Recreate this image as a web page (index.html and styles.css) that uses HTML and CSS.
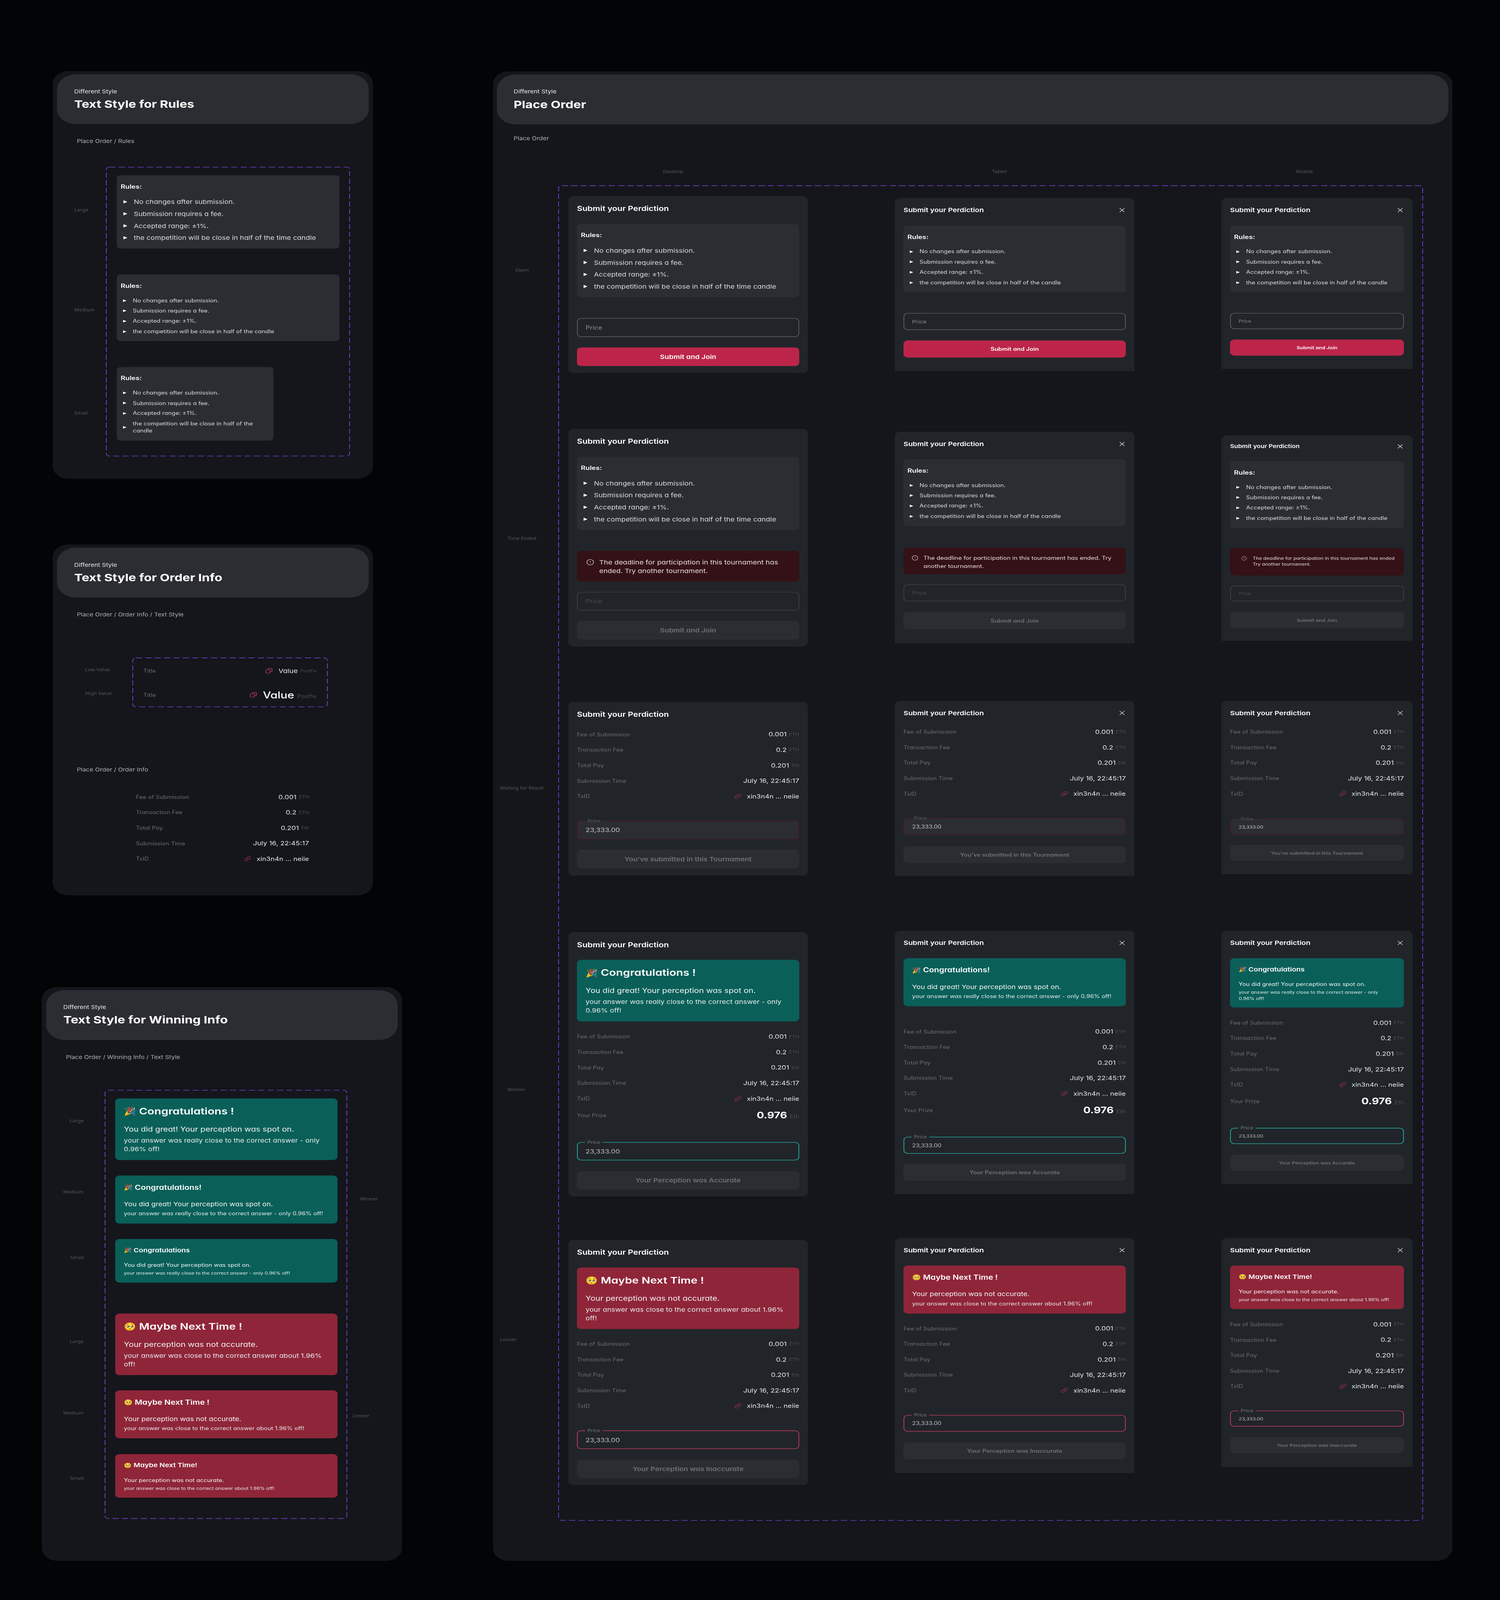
FILE: index.html
```html
<!DOCTYPE html>
<html lang="en">
<head>
<meta charset="utf-8">
<title>Place Order</title>
<link rel="stylesheet" href="styles.css">
</head>
<body>
<svg class="sprite" aria-hidden="true">
  <symbol id="i-link" viewBox="0 0 24 24"><path d="M10 13a5 5 0 0 0 7.54.54l3-3a5 5 0 0 0-7.07-7.07l-1.72 1.71"/><path d="M14 11a5 5 0 0 0-7.54-.54l-3 3a5 5 0 0 0 7.07 7.07l1.71-1.71"/></symbol>
  <symbol id="i-copy" viewBox="0 0 24 24"><rect x="2" y="8" width="13" height="13" rx="3"/><path d="M9 8V6a3 3 0 0 1 3-3h6a3 3 0 0 1 3 3v6a3 3 0 0 1-3 3h-3"/></symbol>
  <symbol id="i-x" viewBox="0 0 24 24"><path d="M4 4l16 16M20 4L4 20"/></symbol>
  <symbol id="i-alert" viewBox="0 0 24 24"><path d="M12 16h.01"/><path d="M12 8v4"/><path d="M15.312 2a2 2 0 0 1 1.414.586l4.688 4.688A2 2 0 0 1 22 8.688v6.624a2 2 0 0 1-.586 1.414l-4.688 4.688a2 2 0 0 1-1.414.586H8.688a2 2 0 0 1-1.414-.586l-4.688-4.688A2 2 0 0 1 2 15.312V8.688a2 2 0 0 1 .586-1.414l4.688-4.688A2 2 0 0 1 8.688 2z"/></symbol>
</svg>
<div class="canvas">
<div class="left">

<section class="panel p-rules">
  <header class="head"><p class="head-sub">Different Style</p><h2 class="head-title">Text Style for Rules</h2></header>
  <p class="crumb">Place Order / Rules</p>
  <div class="board b-rules">
    <div class="side s-rules">
      <span class="tag mt-126">Large</span>
      <span class="tag mt-297">Medium</span>
      <span class="tag mt-306">Small</span>
    </div>
    <div class="dash d-rules">
      <svg class="dash-line"><rect x="1" y="1" rx="8"/></svg>
      <div class="rules r-lg">
        <h4>Rules:</h4>
        <ul><li>No changes after submission.</li><li>Submission requires a fee.</li><li>Accepted range: ±1%.</li><li>the competition will be close in half of the time candle</li></ul>
      </div>
      <div class="rules r-md mt-82">
        <h4>Rules:</h4>
        <ul><li>No changes after submission.</li><li>Submission requires a fee.</li><li>Accepted range: ±1%.</li><li>the competition will be close in half of the candle</li></ul>
      </div>
      <div class="rules r-md r-narrow mt-82">
        <h4>Rules:</h4>
        <ul><li>No changes after submission.</li><li>Submission requires a fee.</li><li>Accepted range: ±1%.</li><li>the competition will be close in half of the candle</li></ul>
      </div>
    </div>
  </div>
</section>

<section class="panel p-info">
  <header class="head"><p class="head-sub">Different Style</p><h2 class="head-title">Text Style for Order Info</h2></header>
  <p class="crumb">Place Order / Order Info / Text Style</p>
  <div class="board b-info">
    <div class="side s-info">
      <span class="tag mt-28">Low Value</span>
      <span class="tag mt-55">High Value</span>
    </div>
    <div class="dash d-info">
      <svg class="dash-line"><rect x="1" y="1" rx="8"/></svg>
      <div class="row sample-low"><span class="key">Title</span><span class="val"><svg class="ico copy"><use href="#i-copy"/></svg><span class="num">Value</span><span class="post">Postfix</span></span></div>
      <div class="row sample-high"><span class="key">Title</span><span class="val"><svg class="ico copy"><use href="#i-copy"/></svg><span class="num">Value</span><span class="post">Postfix</span></span></div>
    </div>
  </div>
  <p class="crumb crumb-second">Place Order / Order Info</p>
  <div class="rows info-table">
    <div class="row"><span class="key">Fee of Submission</span><span class="val"><span class="num">0.001</span><span class="unit">ETH</span></span></div>
    <div class="row"><span class="key">Transaction Fee</span><span class="val"><span class="num">0.2</span><span class="unit">ETH</span></span></div>
    <div class="row"><span class="key">Total Pay</span><span class="val"><span class="num">0.201</span><span class="unit">Eth</span></span></div>
    <div class="row"><span class="key">Submission Time</span><span class="val"><span class="num">July 16, 22:45:17</span></span></div>
    <div class="row"><span class="key">TxID</span><span class="val"><svg class="ico link"><use href="#i-link"/></svg><span class="num hash">xin3n4n ... neiie</span></span></div>
  </div>
</section>

<section class="panel p-win">
  <header class="head"><p class="head-sub">Different Style</p><h2 class="head-title">Text Style for Winning Info</h2></header>
  <p class="crumb">Place Order / Winning Info / Text Style</p>
  <div class="board b-win">
    <div class="side s-win">
      <span class="tag mt-87">Large</span>
      <span class="tag mt-206">Medium</span>
      <span class="tag mt-187">Small</span>
      <span class="tag mt-246">Large</span>
      <span class="tag mt-206">Medium</span>
      <span class="tag mt-187">Small</span>
    </div>
    <div class="dash d-win">
      <svg class="dash-line"><rect x="1" y="1" rx="8"/></svg>
      <div class="notice good n-l"><h5><span class="emoji">🎉</span>Congratulations !</h5><p class="lead">You did great! Your perception was spot on.</p><p class="fine">your answer was really close to the correct answer - only 0.96% off!</p></div>
      <div class="notice good n-m mt-49"><h5><span class="emoji">🎉</span>Congratulations!</h5><p class="lead">You did great! Your perception was spot on.</p><p class="fine">your answer was really close to the correct answer - only 0.96% off!</p></div>
      <div class="notice good n-s mt-49"><h5><span class="emoji">🎉</span>Congratulations</h5><p class="lead">You did great! Your perception was spot on.</p><p class="fine">your answer was really close to the correct answer - only 0.96% off!</p></div>
      <div class="notice bad n-l mt-98"><h5><span class="emoji">🥺</span>Maybe Next Time !</h5><p class="lead">Your perception was not accurate.</p><p class="fine">your answer was close to the correct answer about 1.96% off!</p></div>
      <div class="notice bad n-m mt-48"><h5><span class="emoji">🥺</span>Maybe Next Time !</h5><p class="lead">Your perception was not accurate.</p><p class="fine">your answer was close to the correct answer about 1.96% off!</p></div>
      <div class="notice bad n-s mt-50"><h5><span class="emoji">🥺</span>Maybe Next Time!</h5><p class="lead">Your perception was not accurate.</p><p class="fine">your answer was close to the correct answer about 1.96% off!</p></div>
    </div>
    <div class="side s-win-right">
      <span class="tag tag-winner">Winner</span>
      <span class="tag tag-looser">Looser</span>
    </div>
  </div>
</section>

</div>

<section class="panel p-main">
  <header class="head"><p class="head-sub">Different Style</p><h2 class="head-title">Place Order</h2></header>
  <p class="crumb">Place Order</p>
  <div class="col-heads"><span class="tag">Desktop</span><span class="tag">Tablet</span><span class="tag">Mobile</span></div>
  <div class="board b-main">
    <div class="side s-main">
      <span class="tag l-open">Open</span>
      <span class="tag l-ended">Time Ended</span>
      <span class="tag l-wait">Waiting for Result</span>
      <span class="tag l-winner">Winner</span>
      <span class="tag l-looser">Looser</span>
    </div>
    <div class="dash d-main">
      <svg class="dash-line"><rect x="1" y="1" rx="8"/></svg>
      <div class="matrix">

        <!-- Open -->
        <article class="modal lg">
          <div class="m-top"><h3>Submit your Perdiction</h3></div>
          <div class="rules r-lg"><h4>Rules:</h4><ul><li>No changes after submission.</li><li>Submission requires a fee.</li><li>Accepted range: ±1%.</li><li>the competition will be close in half of the time candle</li></ul></div>
          <div class="field h-60 mt-66"><span class="ph">Price</span></div>
          <button class="btn primary mt-33">Submit and Join</button>
        </article>
        <article class="modal md shift-6">
          <div class="m-top"><h3>Submit your Perdiction</h3><svg class="ico close"><use href="#i-x"/></svg></div>
          <div class="rules r-md"><h4>Rules:</h4><ul><li>No changes after submission.</li><li>Submission requires a fee.</li><li>Accepted range: ±1%.</li><li>the competition will be close in half of the candle</li></ul></div>
          <div class="field mt-65"><span class="ph">Price</span></div>
          <button class="btn primary mt-33">Submit and Join</button>
        </article>
        <article class="modal sm shift-6">
          <div class="m-top"><h3>Submit your Perdiction</h3><svg class="ico close"><use href="#i-x"/></svg></div>
          <div class="rules r-md"><h4>Rules:</h4><ul><li>No changes after submission.</li><li>Submission requires a fee.</li><li>Accepted range: ±1%.</li><li>the competition will be close in half of the candle</li></ul></div>
          <div class="field mt-65"><span class="ph">Price</span></div>
          <button class="btn primary h-52 mt-33">Submit and Join</button>
        </article>

        <!-- Time ended -->
        <article class="modal lg">
          <div class="m-top"><h3>Submit your Perdiction</h3></div>
          <div class="rules r-lg"><h4>Rules:</h4><ul><li>No changes after submission.</li><li>Submission requires a fee.</li><li>Accepted range: ±1%.</li><li>the competition will be close in half of the time candle</li></ul></div>
          <div class="alert mt-66"><svg class="ico warn"><use href="#i-alert"/></svg><p>The deadline for participation in this tournament has<br>ended. Try another tournament.</p></div>
          <div class="field off mt-33"><span class="ph">Price</span></div>
          <button class="btn mt-33">Submit and Join</button>
        </article>
        <article class="modal md shift-9 pb-45">
          <div class="m-top"><h3>Submit your Perdiction</h3><svg class="ico close"><use href="#i-x"/></svg></div>
          <div class="rules r-md"><h4>Rules:</h4><ul><li>No changes after submission.</li><li>Submission requires a fee.</li><li>Accepted range: ±1%.</li><li>the competition will be close in half of the candle</li></ul></div>
          <div class="alert mt-68"><svg class="ico warn"><use href="#i-alert"/></svg><p>The deadline for participation in this tournament has ended. Try<br>another tournament.</p></div>
          <div class="field off mt-32"><span class="ph">Price</span></div>
          <button class="btn mt-34">Submit and Join</button>
        </article>
        <article class="modal sm tiny-title shift-21 pb-40">
          <div class="m-top"><h3>Submit your Perdiction</h3><svg class="ico close"><use href="#i-x"/></svg></div>
          <div class="rules r-md"><h4>Rules:</h4><ul><li>No changes after submission.</li><li>Submission requires a fee.</li><li>Accepted range: ±1%.</li><li>the competition will be close in half of the candle</li></ul></div>
          <div class="alert mt-64"><svg class="ico warn"><use href="#i-alert"/></svg><p>The deadline for participation in this tournament has ended<br>Try another tournament.</p></div>
          <div class="field off h-50 mt-32"><span class="ph">Price</span></div>
          <button class="btn mt-34">Submit and Join</button>
        </article>

        <!-- Waiting for result -->
        <article class="modal lg shift-4">
          <div class="m-top"><h3>Submit your Perdiction</h3></div>
          <div class="rows mt-34">
            <div class="row"><span class="key">Fee of Submission</span><span class="val"><span class="num">0.001</span><span class="unit">ETH</span></span></div>
            <div class="row"><span class="key">Transaction Fee</span><span class="val"><span class="num">0.2</span><span class="unit">ETH</span></span></div>
            <div class="row"><span class="key">Total Pay</span><span class="val"><span class="num">0.201</span><span class="unit">Eth</span></span></div>
            <div class="row"><span class="key">Submission Time</span><span class="val"><span class="num">July 16, 22:45:17</span></span></div>
            <div class="row"><span class="key">TxID</span><span class="val"><svg class="ico link"><use href="#i-link"/></svg><span class="num hash">xin3n4n ... neiie</span></span></div>
          </div>
          <div class="field sent h-60 mt-65"><span class="float">Price</span><span class="entry">23,333.00</span></div>
          <button class="btn h-60 mt-32">You've submitted in this Tournament</button>
        </article>
        <article class="modal md pb-41">
          <div class="m-top"><h3>Submit your Perdiction</h3><svg class="ico close"><use href="#i-x"/></svg></div>
          <div class="rows mt-32">
            <div class="row"><span class="key">Fee of Submission</span><span class="val"><span class="num">0.001</span><span class="unit">ETH</span></span></div>
            <div class="row"><span class="key">Transaction Fee</span><span class="val"><span class="num">0.2</span><span class="unit">ETH</span></span></div>
            <div class="row"><span class="key">Total Pay</span><span class="val"><span class="num">0.201</span><span class="unit">Eth</span></span></div>
            <div class="row"><span class="key">Submission Time</span><span class="val"><span class="num">July 16, 22:45:17</span></span></div>
            <div class="row"><span class="key">TxID</span><span class="val"><svg class="ico link"><use href="#i-link"/></svg><span class="num hash">xin3n4n ... neiie</span></span></div>
          </div>
          <div class="field sent mt-65"><span class="float">Price</span><span class="entry">23,333.00</span></div>
          <button class="btn mt-35">You've submitted in this Tournament</button>
        </article>
        <article class="modal sm">
          <div class="m-top"><h3>Submit your Perdiction</h3><svg class="ico close"><use href="#i-x"/></svg></div>
          <div class="rows mt-32">
            <div class="row"><span class="key">Fee of Submission</span><span class="val"><span class="num">0.001</span><span class="unit">ETH</span></span></div>
            <div class="row"><span class="key">Transaction Fee</span><span class="val"><span class="num">0.2</span><span class="unit">ETH</span></span></div>
            <div class="row"><span class="key">Total Pay</span><span class="val"><span class="num">0.201</span><span class="unit">Eth</span></span></div>
            <div class="row"><span class="key">Submission Time</span><span class="val"><span class="num">July 16, 22:45:17</span></span></div>
            <div class="row"><span class="key">TxID</span><span class="val"><svg class="ico link"><use href="#i-link"/></svg><span class="num hash">xin3n4n ... neiie</span></span></div>
          </div>
          <div class="field sent mt-67"><span class="float">Price</span><span class="entry">23,333.00</span></div>
          <button class="btn mt-32">You've submitted in this Tournament</button>
        </article>

        <!-- Winner -->
        <article class="modal lg shift-5">
          <div class="m-top"><h3>Submit your Perdiction</h3></div>
          <div class="notice good n-l"><h5><span class="emoji">🎉</span>Congratulations !</h5><p class="lead">You did great! Your perception was spot on.</p><p class="fine">your answer was really close to the correct answer - only 0.96% off!</p></div>
          <div class="rows mt-36">
            <div class="row"><span class="key">Fee of Submission</span><span class="val"><span class="num">0.001</span><span class="unit">ETH</span></span></div>
            <div class="row"><span class="key">Transaction Fee</span><span class="val"><span class="num">0.2</span><span class="unit">ETH</span></span></div>
            <div class="row"><span class="key">Total Pay</span><span class="val"><span class="num">0.201</span><span class="unit">Eth</span></span></div>
            <div class="row"><span class="key">Submission Time</span><span class="val"><span class="num">July 16, 22:45:17</span></span></div>
            <div class="row"><span class="key">TxID</span><span class="val"><svg class="ico link"><use href="#i-link"/></svg><span class="num hash">xin3n4n ... neiie</span></span></div>
          </div>
          <div class="row prize mt-21"><span class="key">Your Prize</span><span class="val"><span class="num">0.976</span><span class="post">Eth</span></span></div>
          <div class="field right h-58 mt-65"><span class="float">Price</span><span class="entry">23,333.00</span></div>
          <button class="btn h-58 mt-34">Your Perception was Accurate</button>
        </article>
        <article class="modal md pb-42">
          <div class="m-top"><h3>Submit your Perdiction</h3><svg class="ico close"><use href="#i-x"/></svg></div>
          <div class="notice good n-m"><h5><span class="emoji">🎉</span>Congratulations!</h5><p class="lead">You did great! Your perception was spot on.</p><p class="fine">your answer was really close to the correct answer - only 0.96% off!</p></div>
          <div class="rows mt-68">
            <div class="row"><span class="key">Fee of Submission</span><span class="val"><span class="num">0.001</span><span class="unit">ETH</span></span></div>
            <div class="row"><span class="key">Transaction Fee</span><span class="val"><span class="num">0.2</span><span class="unit">ETH</span></span></div>
            <div class="row"><span class="key">Total Pay</span><span class="val"><span class="num">0.201</span><span class="unit">Eth</span></span></div>
            <div class="row"><span class="key">Submission Time</span><span class="val"><span class="num">July 16, 22:45:17</span></span></div>
            <div class="row"><span class="key">TxID</span><span class="val"><svg class="ico link"><use href="#i-link"/></svg><span class="num hash">xin3n4n ... neiie</span></span></div>
          </div>
          <div class="row prize mt-21"><span class="key">Your Prize</span><span class="val"><span class="num">0.976</span><span class="post">Eth</span></span></div>
          <div class="field right mt-64"><span class="float">Price</span><span class="entry">23,333.00</span></div>
          <button class="btn h-56 mt-32">Your Perception was Accurate</button>
        </article>
        <article class="modal sm">
          <div class="m-top"><h3>Submit your Perdiction</h3><svg class="ico close"><use href="#i-x"/></svg></div>
          <div class="notice good n-s"><h5><span class="emoji">🎉</span>Congratulations</h5><p class="lead">You did great! Your perception was spot on.</p><p class="fine">your answer was really close to the correct answer - only 0.96% off!</p></div>
          <div class="rows mt-36">
            <div class="row"><span class="key">Fee of Submission</span><span class="val"><span class="num">0.001</span><span class="unit">ETH</span></span></div>
            <div class="row"><span class="key">Transaction Fee</span><span class="val"><span class="num">0.2</span><span class="unit">ETH</span></span></div>
            <div class="row"><span class="key">Total Pay</span><span class="val"><span class="num">0.201</span><span class="unit">Eth</span></span></div>
            <div class="row"><span class="key">Submission Time</span><span class="val"><span class="num">July 16, 22:45:17</span></span></div>
            <div class="row"><span class="key">TxID</span><span class="val"><svg class="ico link"><use href="#i-link"/></svg><span class="num hash">xin3n4n ... neiie</span></span></div>
          </div>
          <div class="row prize mt-21"><span class="key">Your Prize</span><span class="val"><span class="num">0.976</span><span class="post">Eth</span></span></div>
          <div class="field right mt-64"><span class="float">Price</span><span class="entry">23,333.00</span></div>
          <button class="btn mt-34">Your Perception was Accurate</button>
        </article>

        <!-- Looser -->
        <article class="modal lg shift-6">
          <div class="m-top"><h3>Submit your Perdiction</h3></div>
          <div class="notice bad n-l"><h5><span class="emoji">🥺</span>Maybe Next Time !</h5><p class="lead">Your perception was not accurate.</p><p class="fine">your answer was close to the correct answer about 1.96% off!</p></div>
          <div class="rows mt-35">
            <div class="row"><span class="key">Fee of Submission</span><span class="val"><span class="num">0.001</span><span class="unit">ETH</span></span></div>
            <div class="row"><span class="key">Transaction Fee</span><span class="val"><span class="num">0.2</span><span class="unit">ETH</span></span></div>
            <div class="row"><span class="key">Total Pay</span><span class="val"><span class="num">0.201</span><span class="unit">Eth</span></span></div>
            <div class="row"><span class="key">Submission Time</span><span class="val"><span class="num">July 16, 22:45:17</span></span></div>
            <div class="row"><span class="key">TxID</span><span class="val"><svg class="ico link"><use href="#i-link"/></svg><span class="num hash">xin3n4n ... neiie</span></span></div>
          </div>
          <div class="field wrong mt-66"><span class="float">Price</span><span class="entry">23,333.00</span></div>
          <button class="btn h-58 mt-34">Your Perception was Inaccurate</button>
        </article>
        <article class="modal md">
          <div class="m-top"><h3>Submit your Perdiction</h3><svg class="ico close"><use href="#i-x"/></svg></div>
          <div class="notice bad n-m"><h5><span class="emoji">🥺</span>Maybe Next Time !</h5><p class="lead">Your perception was not accurate.</p><p class="fine">your answer was close to the correct answer about 1.96% off!</p></div>
          <div class="rows mt-35">
            <div class="row"><span class="key">Fee of Submission</span><span class="val"><span class="num">0.001</span><span class="unit">ETH</span></span></div>
            <div class="row"><span class="key">Transaction Fee</span><span class="val"><span class="num">0.2</span><span class="unit">ETH</span></span></div>
            <div class="row"><span class="key">Total Pay</span><span class="val"><span class="num">0.201</span><span class="unit">Eth</span></span></div>
            <div class="row"><span class="key">Submission Time</span><span class="val"><span class="num">July 16, 22:45:17</span></span></div>
            <div class="row"><span class="key">TxID</span><span class="val"><svg class="ico link"><use href="#i-link"/></svg><span class="num hash">xin3n4n ... neiie</span></span></div>
          </div>
          <div class="field wrong h-53 mt-66"><span class="float">Price</span><span class="entry">23,333.00</span></div>
          <button class="btn mt-34">Your Perception was Inaccurate</button>
        </article>
        <article class="modal sm pb-44">
          <div class="m-top"><h3>Submit your Perdiction</h3><svg class="ico close"><use href="#i-x"/></svg></div>
          <div class="notice bad n-s"><h5><span class="emoji">🥺</span>Maybe Next Time!</h5><p class="lead">Your perception was not accurate.</p><p class="fine">your answer was close to the correct answer about 1.96% off!</p></div>
          <div class="rows mt-36">
            <div class="row"><span class="key">Fee of Submission</span><span class="val"><span class="num">0.001</span><span class="unit">ETH</span></span></div>
            <div class="row"><span class="key">Transaction Fee</span><span class="val"><span class="num">0.2</span><span class="unit">ETH</span></span></div>
            <div class="row"><span class="key">Total Pay</span><span class="val"><span class="num">0.201</span><span class="unit">Eth</span></span></div>
            <div class="row"><span class="key">Submission Time</span><span class="val"><span class="num">July 16, 22:45:17</span></span></div>
            <div class="row"><span class="key">TxID</span><span class="val"><svg class="ico link"><use href="#i-link"/></svg><span class="num hash">xin3n4n ... neiie</span></span></div>
          </div>
          <div class="field wrong mt-65"><span class="float">Price</span><span class="entry">23,333.00</span></div>
          <button class="btn mt-33">Your Perception was Inaccurate</button>
        </article>

      </div>
    </div>
  </div>
</section>
</div>
</body>
</html>
```
FILE: styles.css
```css
* { box-sizing: border-box; }
html, body { margin: 0; padding: 0; background: #030406; }
body { font-family: Inter, "Noto Sans", sans-serif; font-feature-settings: "cv11"; color: #fff; }
h2, h3, h4, h5, p, ul { margin: 0; padding: 0; font-weight: 400; }
.sprite { position: absolute; width: 0; height: 0; overflow: hidden; }

.canvas { display: flex; align-items: flex-start; width: 3840px; height: 5066px; padding: 225px 0 0 107px; }
.left { display: flex; flex-direction: column; align-items: flex-start; width: 922px; margin-right: 233px; flex: none; }

/* the sandbox window stops at 4096px: fit the 5066px board into it */
@media (max-height: 5000px) {
  html { height: 100vh; overflow: hidden; }
  body { height: 100vh; overflow: clip; }
  .canvas { transform: scaleY(0.80853); transform-origin: 0 0; margin-bottom: -970px; }
}

/* panels */
.panel { background: #14161b; border-radius: 40px; flex: none; }
.p-rules { width: 820px; height: 1291px; margin-left: 28px; }
.p-info { width: 820px; height: 1111px; margin: 208px 0 0 28px; }
.p-win { width: 922px; height: 1817px; margin-top: 290px; }
.p-main { width: 2456px; height: 4716px; margin-top: 1px; }

.head { height: 158px; margin: 10px 11px 0; padding: 44px 0 0 44px; background: #2b2d32; border-radius: 48px; font-feature-settings: normal; }
.p-main .head { margin: 10px 10px 0; padding-left: 43px; }
.head-sub { font-size: 16.3px; line-height: 20px; color: #eceded; }
.head-title { margin-top: 11px; font-size: 32.5px; line-height: 40px; font-weight: 700; color: #fff; }

.crumb { margin: 44px 0 0 62px; font-size: 16.2px; line-height: 20px; color: #b1b3b6; font-feature-settings: normal; }
.p-main .crumb { margin: 34px 0 0 53px; }
.crumb-second { margin-top: 188px; }

.tag { display: block; font-family: "Noto Sans", sans-serif; font-feature-settings: normal; font-size: 13.4px; line-height: 20px; color: #56595f; white-space: nowrap; }

/* boards */
.board { display: flex; align-items: flex-start; }
.b-rules { margin-top: 71px; }
.b-info { margin-top: 126px; }
.b-win { margin-top: 94px; }
.b-main { margin-top: 34px; }
.side { flex: none; }
.s-rules { width: 136px; padding-left: 55px; }
.s-info { width: 204px; padding-left: 83px; }
.s-win { width: 161px; padding-right: 54px; text-align: right; }
.s-win-right { width: 140px; }
.s-main { width: 167px; }
.tag-winner { margin: 335px 0 0 33px; }
.tag-looser { margin: 666px 0 0 14px; }
.l-open { margin: 257px 0 0 57px; }
.l-ended { margin: 830px 0 0 37px; }
.l-wait { margin: 771px 0 0 18px; }
.l-winner { margin: 935px 0 0 37px; }
.l-looser { margin: 771px 0 0 18px; }

.col-heads { display: grid; grid-template-columns: 843px 778px auto; margin-top: 85px; padding-left: 435px; }

.dash { position: relative; flex: none; }
.dash-line { position: absolute; inset: 0; width: 100%; height: 100%; overflow: visible; pointer-events: none; }
.dash-line rect { width: calc(100% - 2px); height: calc(100% - 2px); fill: none; stroke: #6d3fc4; stroke-width: 2px; stroke-dasharray: 16 8; }
.d-rules { width: 625px; height: 917px; padding: 27px 0 0 28px; }
.d-info { width: 500px; height: 157px; padding: 27px 28px 0; }
.d-win { width: 621px; height: 1358px; padding: 27px 0 0 27px; }
.d-main { width: 2214px; height: 4228px; padding: 34px 0 0 26px; }

.matrix { display: grid; grid-template-columns: 613px 613px 489px; grid-template-rows: 737px 861px 728px 973px auto; column-gap: 223px; align-items: start; }

/* modal */
.modal { background: #21252a; padding: 22px 22px 22px; }
.modal.lg { border-radius: 14px; }
.modal.md, .modal.sm { border-radius: 14px 14px 0 0; }
.modal.md { padding-bottom: 43px; }
.modal.sm { padding-bottom: 42px; }
.m-top { display: flex; align-items: center; justify-content: space-between; height: 34px; }
.md .m-top, .sm .m-top { height: 32px; }
.m-top h3 { font-size: 21.4px; font-weight: 600; color: #fff; white-space: nowrap; }
.md h3, .sm h3 { font-size: 18.7px; }
.tiny-title .m-top { height: 24px; }
.tiny-title h3 { font-size: 16.2px; }
.modal > .rules { margin-top: 32px; }
.md > .rules, .sm > .rules { margin-top: 33px; }
.tiny-title > .rules { margin-top: 35px; }
.modal > .notice { margin-top: 31px; }
.md > .notice, .sm > .notice { margin-top: 33px; }
.ico { fill: none; stroke: currentColor; stroke-width: 2; stroke-linecap: round; stroke-linejoin: round; flex: none; }
.close { width: 17px; height: 17px; color: #e8e8e9; margin-right: 1px; }

/* rules */
.rules { background: #2b2d32; border-radius: 10px; padding: 22px 10px 21px; }
.rules h4 { font-size: 18.1px; line-height: 26px; font-weight: 600; color: #fff; }
.rules ul { list-style: none; margin-top: 23px; display: flex; flex-direction: column; }
.rules li { display: flex; align-items: center; color: #dcdddf; }
.rules li::before { content: ""; flex: none; border-style: solid; border-color: transparent transparent transparent #fff; }
.r-lg ul { gap: 12px; }
.r-lg li { font-size: 18.3px; line-height: 26px; }
.r-lg li::before { border-width: 5.5px 0 5.5px 10px; margin: 0 16.5px 0 7px; }
.r-md { padding: 23px 10px 20.5px; }
.r-md ul { gap: 11.3px; }
.r-md li { font-size: 15.6px; line-height: 21.4px; }
.r-md li::before { border-width: 4.5px 0 4.5px 9px; margin: 0 16px 0 6px; }
.d-rules .r-lg { width: 570px; }
.d-rules .r-md { width: 570px; height: 211px; }
.d-rules .r-narrow { width: 401px; height: 233px; padding-top: 22px; }

/* info rows */
.rows { display: flex; flex-direction: column; gap: 25px; }
.row { display: flex; align-items: center; justify-content: space-between; height: 24px; }
.key { font-size: 15.6px; color: #6a6d73; white-space: nowrap; }
.val { display: flex; align-items: center; white-space: nowrap; }
.num { font-size: 18.3px; color: #e6e7e8; }
.unit { margin-left: 6px; font-size: 13.1px; color: #4b4e54; }
.hash { font-size: 17.9px; }
.link { width: 18px; height: 18px; margin-right: 14px; color: #a62c56; }
.info-table { width: 443px; margin: 64px 0 0 213px; }
.prize { height: 40px; }
.prize .val { align-items: baseline; }
.prize .num { font-size: 27.7px; font-weight: 700; color: #fff; }
.post { color: #4b4e54; }
.prize .post { margin-left: 7px; font-size: 15.8px; }

.sample-low { height: 30px; }
.sample-high { height: 44px; margin-top: 39px; }
.copy { width: 20px; height: 20px; color: #b43b5e; margin-right: 14px; }
.sample-low .val, .sample-high .val { align-items: center; }
.sample-low .num { font-size: 18.4px; }
.sample-low .post { margin-left: 6px; font-size: 13.3px; }
.sample-high .num { font-size: 29.5px; font-weight: 500; color: #fff; }
.sample-high .post { margin-left: 8px; padding-top: 8px; font-size: 15.5px; }

/* field */
.field { position: relative; display: flex; align-items: center; height: 59px; padding-left: 20px; border: 2px solid #565a60; border-radius: 11px; font-size: 17.7px; color: #8a8d92; }
.md .field { height: 54px; font-size: 15.2px; }
.sm .field { height: 51px; font-size: 13.2px; }
.modal .h-60 { height: 60px; }
.modal .h-58 { height: 58px; }
.modal .h-56 { height: 56px; }
.modal .h-53 { height: 53px; }
.modal .h-52 { height: 52px; }
.modal .h-50 { height: 50px; }
.field.off { border-color: #3a3e44; color: #45484d; }
.field.sent { background: #2b2d32; border-color: #4a1b29; }
.field.right { border-color: #25a195; }
.field.wrong { border-color: #b33b57; }
.entry { font-size: 18.3px; color: #bcbec1; }
.md .entry { font-size: 15.6px; }
.sm .entry { font-size: 13.1px; }
.float { position: absolute; top: -11px; left: 19px; padding: 0 6px; background: #21252a; font-size: 13.4px; line-height: 18px; color: #73767c; }
.sent .float { color: #55585d; background: linear-gradient(#21252a 55%, #2b2d32 55%); }

/* buttons */
.btn { display: block; width: 100%; height: 59px; border: 0; border-radius: 11px; padding: 0; font-family: inherit; font-feature-settings: inherit; font-size: 18.4px; font-weight: 600; background: #2b2d32; color: #6f7278; }
.md .btn { height: 54px; font-size: 15.8px; }
.sm .btn { height: 51px; font-size: 13.3px; }
.btn.primary { background: #bc2549; color: #fff; }

/* alert */
.alert { display: flex; align-items: flex-start; border-radius: 10px; background: #331116; color: #ebdfe0; height: 97px; padding: 22px 0 0 24px; font-size: 18.4px; line-height: 28px; white-space: nowrap; }
.warn { width: 20px; height: 20px; margin: 4px 13px 0 0; stroke-width: 1.6; }
.md .alert { height: 84px; padding: 20px 0 0 21px; font-size: 15.9px; line-height: 26px; }
.md .warn { width: 17px; height: 17px; margin: 4px 13px 0 0; }
.sm .alert { height: 86px; padding: 22px 0 0 29px; font-size: 12.9px; line-height: 19px; }
.sm .warn { width: 14px; height: 14px; margin: 3px 15px 0 0; }

/* winner / looser notices */
.notice { border-radius: 11px; color: #fff; }
.d-win .notice { width: 569px; }
.notice.good { background: #0a5f59; }
.notice.bad { background: #8f2539; }
.notice h5 { display: flex; align-items: center; font-weight: 600; white-space: nowrap; }
.lead { white-space: nowrap; color: #f3f6f6; }
.fine { color: #e6ecec; }
.n-l { height: 195px; padding: 22px 22px 0; }
.n-l h5 { font-size: 29px; line-height: 38px; }
.n-l .emoji { font-size: 25px; margin-right: 8px; }
.n-l .lead { margin-top: 23px; font-size: 21px; line-height: 30px; }
.n-l .fine { margin-top: 7px; font-size: 18.4px; line-height: 27px; }
.n-m { height: 152px; padding: 22px 22px 0; }
.n-m h5 { font-size: 21px; line-height: 32px; }
.n-m .emoji { font-size: 18px; margin-right: 6px; }
.n-m .lead { margin-top: 23px; font-size: 18.4px; line-height: 26px; }
.n-m .fine { margin-top: 6px; font-size: 15.7px; line-height: 24px; }
.n-s { min-height: 138px; padding: 22px 22px 20px; }
.n-s h5 { font-size: 18.4px; line-height: 26px; }
.n-s .emoji { font-size: 16px; margin-right: 5px; }
.n-s .lead { margin-top: 23px; font-size: 15.7px; line-height: 24px; }
.n-s .fine { margin-top: 4px; font-size: 13.1px; line-height: 18.5px; }

/* spacing helpers */
.shift-4 { margin-top: 4px; }
.shift-5 { margin-top: 5px; }
.shift-6 { margin-top: 6px; }
.shift-9 { margin-top: 9px; }
.shift-21 { margin-top: 21px; }
.modal.pb-40 { padding-bottom: 40px; }
.modal.pb-41 { padding-bottom: 41px; }
.modal.pb-42 { padding-bottom: 42px; }
.modal.pb-44 { padding-bottom: 44px; }
.modal.pb-45 { padding-bottom: 45px; }
.mt-21 { margin-top: 21px; }
.mt-28 { margin-top: 28px; }
.mt-32 { margin-top: 32px; }
.mt-33 { margin-top: 33px; }
.mt-34 { margin-top: 34px; }
.mt-35 { margin-top: 35px; }
.mt-36 { margin-top: 36px; }
.mt-48 { margin-top: 48px; }
.mt-49 { margin-top: 49px; }
.mt-50 { margin-top: 50px; }
.mt-55 { margin-top: 55px; }
.mt-64 { margin-top: 64px; }
.mt-65 { margin-top: 65px; }
.mt-66 { margin-top: 66px; }
.mt-67 { margin-top: 67px; }
.mt-68 { margin-top: 68px; }
.mt-82 { margin-top: 82px; }
.mt-87 { margin-top: 87px; }
.mt-98 { margin-top: 98px; }
.mt-126 { margin-top: 126px; }
.mt-187 { margin-top: 187px; }
.mt-206 { margin-top: 206px; }
.mt-246 { margin-top: 246px; }
.mt-297 { margin-top: 297px; }
.mt-306 { margin-top: 306px; }
```
